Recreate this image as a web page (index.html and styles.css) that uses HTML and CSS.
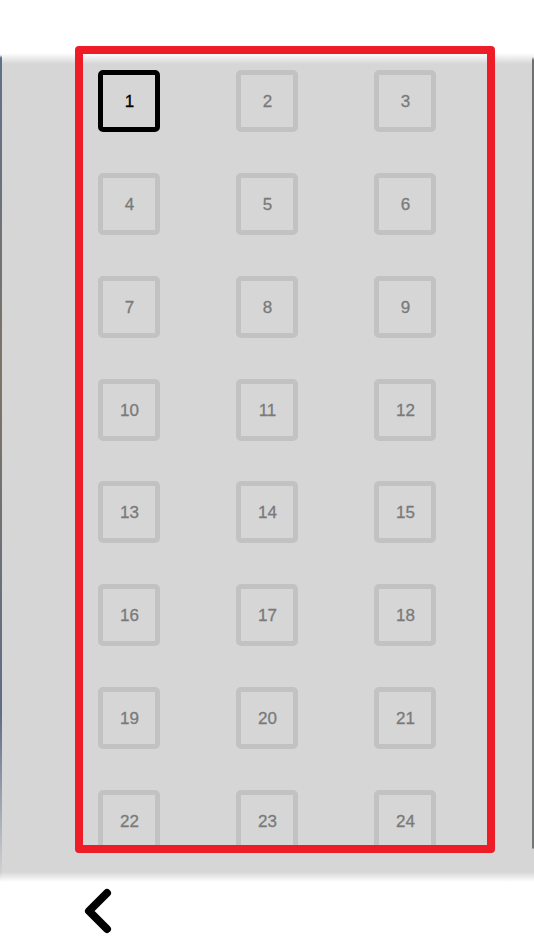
FILE: index.html
```html
<!DOCTYPE html>
<html lang="en">
<head>
    <meta charset="UTF-8">
    <meta name="viewport" content="width=device-width, initial-scale=1.0">
    <title>Pages</title>
    <link rel="stylesheet" href="styles.css">
</head>
<body>
    <div class="screen">
        <div class="panel">
            <div class="frame">
                <div class="pages">
                    <button class="page current">1</button>
                    <button class="page">2</button>
                    <button class="page">3</button>
                    <button class="page">4</button>
                    <button class="page">5</button>
                    <button class="page">6</button>
                    <button class="page">7</button>
                    <button class="page">8</button>
                    <button class="page">9</button>
                    <button class="page">10</button>
                    <button class="page">11</button>
                    <button class="page">12</button>
                    <button class="page">13</button>
                    <button class="page">14</button>
                    <button class="page">15</button>
                    <button class="page">16</button>
                    <button class="page">17</button>
                    <button class="page">18</button>
                    <button class="page">19</button>
                    <button class="page">20</button>
                    <button class="page">21</button>
                    <button class="page">22</button>
                    <button class="page">23</button>
                    <button class="page">24</button>
                </div>
            </div>
        </div>

        <div class="footer">
            <button class="back">
                <svg width="40" height="56" viewBox="0 0 40 56">
                    <polyline points="27,11 9,29 27,47" fill="none" stroke="#000" stroke-width="8" stroke-linecap="round" stroke-linejoin="round"/>
                </svg>
            </button>
        </div>
    </div>
</body>
</html>
```

FILE: styles.css
```css
html, body {
    margin: 0;
    padding: 0;
    background-color: #fff;
}

.screen {
    width: 534px;
    height: 949px;
    overflow: hidden;
    font-family: "Liberation Sans", Arial, sans-serif;
    padding-top: 46px;
    box-sizing: border-box;
}

.panel {
    height: 836px;
    box-sizing: border-box;
    padding-left: 75px;
    background:
        linear-gradient(to bottom, transparent 0, transparent 9px, #60708a 12px, #7d7466 40%, #5f6d86 80%, transparent 100%) left top / 2px 100% no-repeat,
        linear-gradient(to bottom, transparent 0, transparent 11px, #6e6f6e 14px, #727775 100%) right top / 2px 96% no-repeat,
        linear-gradient(to bottom, #fff 0, #fff 7px, #d6d6d6 18px, #d6d6d6 826px, #fff 836px);
}

.frame {
    width: 420px;
    height: 807px;
    box-sizing: border-box;
    border: 8px solid #ee1c27;
    border-radius: 4px;
    overflow: hidden;
}

.pages {
    display: grid;
    grid-template-columns: repeat(3, 62px);
    grid-auto-rows: 62px;
    column-gap: 76px;
    row-gap: 40.85px;
    padding: 16px 0 0 15px;
}

.page {
    width: 62px;
    height: 62px;
    box-sizing: border-box;
    border: 5px solid #c2c2c2;
    border-radius: 5px;
    background-color: #d6d6d6;
    font-family: inherit;
    font-size: 17px;
    color: #7a7a7a;
    padding: 2px 0 0 1px;
    -webkit-text-stroke: 0.3px currentColor;
    cursor: pointer;
}

.page.current {
    border-color: #000;
    color: #000;
}

.footer {
    padding-left: 80px;
}

.back {
    display: block;
    border: none;
    background: none;
    padding: 0;
    cursor: pointer;
}

.back svg {
    display: block;
}
```
